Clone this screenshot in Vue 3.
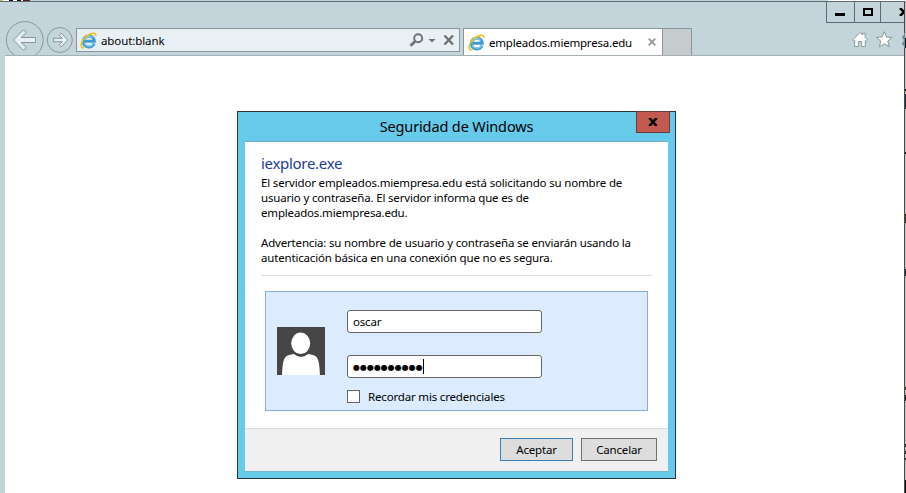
<script setup>
import { ref } from 'vue'

const user = ref('oscar')
const password = ref('●●●●●●●●●●')
const marks = ref([
  { top: 38, size: 10, color: '#06162c' },
  { top: 89, size: 2, color: '#111111' },
  { top: 94, size: 15, color: '#0b2d55' },
  { top: 152, size: 2, color: '#111111' },
  { top: 214, size: 9, color: '#4a2a18' },
  { top: 269, size: 7, color: '#14283a' },
  { top: 387, size: 3, color: '#4a3a2c' },
  { top: 395, size: 6, color: '#2a1a12' },
  { top: 444, size: 3, color: '#222222' },
  { top: 451, size: 3, color: '#222222' },
  { top: 458, size: 2, color: '#222222' },
  { top: 480, size: 13, color: '#111111' },
])
</script>

<template>
  <div class="screen">
    <div class="backdrop"><i class="specks"></i><i class="light"></i></div>
    <div class="browser">
      <header class="chrome">
        <div class="caption">
          <button class="cap min"><svg width="10" height="3"><path d="M0 0h10v3H0z" /></svg></button>
          <button class="cap max"><svg width="10" height="8"><path d="M1 1h8v6H1z" fill="none" stroke="#000" stroke-width="2" /></svg></button>
          <button class="cap end"><svg width="10" height="8" viewBox="0 0 10 8"><path d="M1 0l8 8M9 0L1 8" stroke="#000" stroke-width="2.6" /></svg></button>
        </div>
        <div class="toolbar">
          <svg class="nav" width="71" height="34" viewBox="5 21 71 34">
            <g fill="none" stroke="#87969c">
              <circle cx="24.8" cy="40" r="18.4" />
              <circle cx="59.8" cy="40" r="12.5" />
            </g>
            <g fill="#e9f0f3" stroke="#87969c" stroke-linejoin="round">
              <path d="M13.5 40L23.3 30q2.4.2 2.7 2.7L21 37.500H35.500V42.500H21l5 4.800q-.3 2.500-2.700 2.700z" />
              <path d="M67.8 40L61.500 33.500q-2 .2-2 2L62.300 38.300H53.500V41.700H62.300L59.500 44.500q0 1.800 2 2z" />
            </g>
          </svg>
          <div class="address">
            <svg class="ie" width="17" height="17" viewBox="0 0 17 17">
              <path d="M14 11.400A5.500 5.500 0 1 1 14.300 9.200H5" fill="none" stroke="#3c9bd2" stroke-width="3" />
              <path d="M13.600 11.400A5.200 5.200 0 0 1 4.200 11M4 7.800A5.200 5.200 0 0 1 13 6.500" fill="none" stroke="#7fcbf0" stroke-width="1.200" />
              <path d="M3.500 15.800C-.4 15.400.6 9.600 5.500 5 9.800 1 15.800-.3 15.800 3.500" fill="none" stroke="#f5c21d" stroke-width="1.700" stroke-linecap="round" />
            </svg>
            <span class="url">about:blank</span>
            <svg class="tools" width="46" height="14" viewBox="0 0 46 14">
              <g fill="none" stroke="#6c7274">
                <circle cx="9.2" cy="5.3" r="4" stroke-width="1.9" />
                <path d="M6 8.5L1.500 12.700" stroke-width="2.800" />
                <path d="M35.500 2.500l8.500 9M44 2.500l-8.500 9" stroke-width="2.400" />
              </g>
              <path d="M19.500 6h7L23 9.600z" fill="#6c7274" />
            </svg>
          </div>
          <div class="tab">
            <svg class="ie" width="17" height="17" viewBox="0 0 17 17">
              <path d="M14 11.400A5.500 5.500 0 1 1 14.300 9.200H5" fill="none" stroke="#3c9bd2" stroke-width="3" />
              <path d="M13.600 11.400A5.200 5.200 0 0 1 4.200 11M4 7.800A5.200 5.200 0 0 1 13 6.500" fill="none" stroke="#7fcbf0" stroke-width="1.200" />
              <path d="M3.500 15.800C-.4 15.400.6 9.600 5.500 5 9.800 1 15.800-.3 15.800 3.500" fill="none" stroke="#f5c21d" stroke-width="1.700" stroke-linecap="round" />
            </svg>
            <span class="tab-title">empleados.miempresa.edu</span>
            <svg class="tab-x" width="8" height="8"><path d="M.7 .7l6.6 6.6M7.3 .7L.7 7.3" stroke="#999" stroke-width="1.9" /></svg>
          </div>
          <div class="new-tab"></div>
          <svg class="actions" width="54" height="18" viewBox="851 31 54 18">
            <g fill="#fff" stroke="#8a979c" stroke-linejoin="round">
              <path d="M852.5 40L860 32.500l2.500 2.400V33.200h2.600v4.200L867.600 40l-1.300 1.200-1-.8V46.500H861.600V41.500H858.400V46.500H854.700V40.400l-1 .8z" />
              <path d="M884.300 31.700l2.200 5.300 5.700.4-4.400 3.700 1.400 5.600-4.900-3-4.900 3 1.400-5.600-4.400-3.700 5.700-.4z" />
              <path d="M905 33h-1v2l-1.600 1v3h1.200v3h-1.200v3l1.600 1v2h1z" fill="#78858a" stroke="none" />
            </g>
          </svg>
        </div>
      </header>
      <main class="page">
        <section class="dialog">
          <div class="titlebar">
            <span class="title">Seguridad de Windows</span>
            <button class="close"><svg width="10" height="8" viewBox="0 0 10 8"><path d="M1.4 0l7.2 8M8.6 0L1.4 8" stroke="#000" stroke-width="2.5" /></svg></button>
          </div>
          <div class="body">
            <h1>iexplore.exe</h1>
            <p>
              <span>El servidor empleados.miempresa.edu está solicitando su nombre de</span>
              <span>usuario y contraseña. El servidor informa que es de</span>
              <span>empleados.miempresa.edu.</span>
            </p>
            <p class="warn">
              <span>Advertencia: su nombre de usuario y contraseña se enviarán usando la</span>
              <span>autenticación básica en una conexión que no es segura.</span>
            </p>
            <hr>
            <div class="panel">
              <svg class="avatar" width="48" height="48" viewBox="0 0 48 48">
                <path d="M0 0h48v48H0z" fill="#464646" />
                <path d="M5 48C5.5 39 6 32 9 29.5 12 27.5 15 27.5 17 27q7 6 14 0c2 .5 5 .5 8 2.5C42 32 42.5 39 43 48z" fill="#fff" />
                <ellipse cx="23.7" cy="16.3" rx="10.7" ry="12.2" fill="#464646" />
                <ellipse cx="23.7" cy="16.3" rx="9.5" ry="10.8" fill="#fff" />
              </svg>
              <div class="fields">
                <div class="field"><span class="user">{{ user }}</span></div>
                <div class="field"><span class="dots">{{ password }}</span><i class="caret"></i></div>
                <label class="remember"><i class="box"></i><span class="rem">Recordar mis credenciales</span></label>
              </div>
            </div>
          </div>
          <footer class="footer">
            <button class="btn primary"><span>Aceptar</span></button>
            <button class="btn"><span>Cancelar</span></button>
          </footer>
        </section>
      </main>
    </div>
    <div class="edge"><i v-for="m in marks" :key="m.top" class="mark" :style="{ top: m.top + 'px', height: m.size + 'px', background: m.color }"></i></div>
  </div>
</template>

<style>
body { margin: 0; overflow: hidden; }
</style>

<style scoped>
* { box-sizing: border-box; }
.screen { position: relative; width: 906px; height: 493px; overflow: hidden; background: #c3d5db; font: 11.5px/15px "Noto Sans", "Open Sans", sans-serif; letter-spacing: -0.175px; color: #000; white-space: nowrap; }
button { font: inherit; letter-spacing: inherit; color: inherit; padding: 0; margin: 0; border-radius: 0; }
svg { display: block; flex: none; }
.backdrop { display: flex; justify-content: space-between; height: 1px; }
.specks { width: 32px; background: linear-gradient(90deg, #d6b46e 0 3px, #fff 3px 9px, #111 9px 13px, #fff 13px 17px, #111 17px 21px, #fff 21px 23px, #5c1b1b 23px 30px, #c3d5db 30px); }
.light { width: 78px; background: #fff; }
.browser { width: 905px; height: 492px; border-top: 1px solid #5c6b74; border-right: 1px solid #4a4a4a; padding-left: 5px; }
.chrome { height: 54px; border-bottom: 1px solid #a4b0b5; }
.caption { display: flex; justify-content: flex-end; height: 21px; overflow: hidden; }
.cap { display: flex; align-items: center; justify-content: center; height: 21px; border: solid #5c6b74; border-width: 0 0 1px 1px; background: transparent; }
.min { width: 28px; padding: 5px 1px 0 0; }
.max { width: 26px; }
.end { width: 24px; justify-content: flex-start; padding-left: 18px; overflow: hidden; }
.toolbar { display: flex; height: 32px; }
.nav { margin-top: -2px; }
.address { display: flex; align-items: center; width: 384px; height: 24px; margin: 5px 3px 0 0; padding: 0 4px 0 3px; border: 1px solid #87969c; background: #e9f0f3; }
.url { margin: 1px 0 0 4px; letter-spacing: -0.1px; }
.tools { margin-left: auto; }
.tab { display: flex; align-items: center; width: 200px; height: 27px; margin-top: 5px; padding: 0 6px 0 4px; border: 1px solid #87969c; border-bottom: 0; background: #fff; }
.tab-title { margin: 1px 0 0 4px; letter-spacing: -0.2px; }
.tab-x { margin-left: auto; }
.new-tab { width: 29px; height: 27px; margin-top: 5px; border: solid #87969c; border-width: 1px 1px 0 0; background: #c6cccd; }
.actions { margin: 8px -1px 0 auto; }
.page { height: 437px; padding: 55px 0 0 232px; background: #fff; }
.dialog { width: 439px; height: 368px; border: 1px solid #2b3539; background: #66caea; padding: 0 7px; }
.titlebar { position: relative; display: flex; justify-content: center; height: 30px; border-bottom: 1px solid #6fb1cc; font-size: 14.5px; letter-spacing: -0.13px; line-height: 29px; }
.close { position: absolute; top: -1px; right: -2px; width: 34px; height: 22px; display: flex; align-items: center; justify-content: center; background: #c35a50; border: 1px solid #6a3b3a; }
.body { height: 286px; padding: 11px 16px 0; background: #fff; }
h1 { margin: 0 0 1px; font-size: 15px; line-height: 21px; letter-spacing: -0.3px; font-weight: 400; color: #1a3d99; }
p { margin: 0; }
p span { display: block; }
.warn { margin-top: 15px; }
hr { height: 1px; margin: 10px 0 0; border: 0; background: #dedede; }
.panel { display: flex; width: 383px; height: 120px; margin: 15px 0 0 4px; padding: 18px 0 0 11px; border: 1px solid #84acdd; background: #ddebff; }
.avatar { margin-top: 17px; }
.fields { margin-left: 22px; }
.field { display: flex; align-items: center; width: 195px; height: 23px; margin-bottom: 22px; padding-left: 5px; border: 1px solid #666; border-radius: 3px; background: #fff; }
.dots { margin-top: 1px; font: 8px/15px "DejaVu Sans", sans-serif; letter-spacing: -0.02px; }
.caret { width: 1px; height: 15px; background: #000; }
.remember { display: flex; align-items: center; height: 15px; margin-top: -11px; }
.box { width: 13px; height: 13px; border: 1px solid #666; background: #fff; margin-right: 8px; }
.footer { display: flex; justify-content: flex-end; gap: 8px; height: 44px; padding: 9px 11px 0; border-top: 1px solid #dedede; border-bottom: 1px solid #75b5ca; background: #f0f0f0; }
.btn { width: 76px; height: 23px; border: 1px solid #707070; background: #ddd; }
.primary { width: 73px; border-color: #3c7fb1; }
.edge { position: absolute; top: 0; left: 905px; width: 1px; height: 493px; background: #c4c4c4; }
.mark { position: absolute; left: 0; width: 1px; }
</style>
